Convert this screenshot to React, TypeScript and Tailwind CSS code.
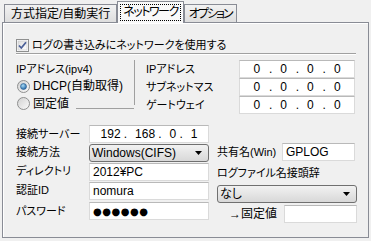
const FONT = {
  fontFamily: '"Liberation Sans", "Noto Sans CJK JP", sans-serif',
  fontFeatureSettings: '"palt"',
};

function CheckBox() {
  return (
    <svg width="13" height="13" viewBox="0 0 13 13" className="shrink-0">
      <defs>
        <linearGradient id="cbg" x1="0" y1="0" x2="1" y2="1">
          <stop offset="0" stopColor="#dcdcdc" />
          <stop offset="1" stopColor="#ffffff" />
        </linearGradient>
      </defs>
      <rect x="0.5" y="0.5" width="12" height="12" fill="#fff" stroke="#8e8f8f" />
      <rect x="2" y="2" width="9" height="9" fill="url(#cbg)" stroke="#c2c4c6" strokeWidth="0.6" />
      <path d="M3 6.5 L5.3 9 L10 3.3" fill="none" stroke="#4a5f97" strokeWidth="1.8" />
    </svg>
  );
}

function Radio({ on }: { on?: boolean }) {
  return (
    <svg width="13" height="13" viewBox="0 0 13 13" className="shrink-0">
      <defs>
        <radialGradient id="rg" cx="0.4" cy="0.35" r="0.7">
          <stop offset="0" stopColor="#a8dbf5" />
          <stop offset="1" stopColor="#1b5ea0" />
        </radialGradient>
        <linearGradient id="ro" x1="0" y1="0" x2="1" y2="1">
          <stop offset="0" stopColor="#d0d0d0" />
          <stop offset="1" stopColor="#fbfbfb" />
        </linearGradient>
      </defs>
      <circle cx="6.5" cy="6.5" r="6" fill="url(#ro)" stroke="#8e8f8f" />
      {on && <circle cx="6.5" cy="6.5" r="3" fill="url(#rg)" stroke="#2a5d8f" strokeWidth="0.6" />}
    </svg>
  );
}

function Box({ w, children }: { w: string; children?: React.ReactNode }) {
  return (
    <div className={`${w} h-[18px] bg-white border border-[#dadada] border-t-[#b9b9b9] flex items-center text-[12px] text-black px-[3px]`}>
      {children}
    </div>
  );
}

function Select({ w, children }: { w: string; children: React.ReactNode }) {
  return (
    <div className={`${w} h-[18px] rounded-[3px] border border-[#707070] bg-gradient-to-b from-[#f2f2f2] to-[#d8d8d8] flex items-center px-[2px] text-[12px]`}>
      <span className="flex-1">{children}</span>
      <svg width="7" height="4" viewBox="0 0 7 4" className="mr-[4px]">
        <path d="M0 0 H7 L3.5 4 Z" fill="#000" />
      </svg>
    </div>
  );
}

function Ip({ parts }: { parts: string[] }) {
  return (
    <span className="flex w-full justify-around px-[6px]">
      {parts.map((p, i) => (
        <span key={i} className="flex gap-[8px]">
          {i > 0 && <span>.</span>}
          <span>{p}</span>
        </span>
      ))}
    </span>
  );
}

export default function App() {
  return (
    <div className="w-[371px] h-[241px] bg-[#f0f0f0] overflow-hidden text-[11px] text-black" style={FONT}>
      {/* tabs */}
      <div className="flex items-end pl-[4px] h-[22px] relative z-10">
        <div className="h-[18px] px-[6px] border border-[#898c95] border-b-0 bg-gradient-to-b from-[#f2f2f2] to-[#dedede] flex items-center text-[12px]">
          方式指定/自動実行
        </div>
        <div className="h-[22px] -mb-px px-[2px] pt-[2px] border border-[#898c95] border-b-0 bg-[#f9f9f9] flex items-start text-[12px]">
          <span className="border border-dotted border-black px-[2px] leading-[15px] tracking-[-1.5px]">ネットワーク</span>
        </div>
        <div className="h-[18px] px-[4px] border border-[#898c95] border-b-0 bg-gradient-to-b from-[#f2f2f2] to-[#dedede] flex items-center text-[12px] tracking-[-2px]">
          オプション
        </div>
      </div>

      {/* panel */}
      <div className="mx-[2px] h-[216px] border border-[#898c95] bg-[#f0f0f0] shadow-[inset_1px_1px_0_#ffffff] pl-[13px] pr-[12px]">
        <div className="flex items-center gap-[3px] mt-[15px] h-[14px]">
          <CheckBox />
          <span>ログの書き込みにネットワークを使用する</span>
        </div>
        <div className="mt-[1px] border-b border-[#a0a0a0] shadow-[0_1px_0_#ffffff]" />

        {/* IP section */}
        <div className="flex mt-[6px]">
          <div className="w-[119px] flex flex-col">
            <div className="h-[45px] border-r border-[#a0a0a0] flex flex-col">
              <div className="h-[18px] flex items-center mt-[1px]">IPアドレス(ipv4)</div>
              <div className="h-[17px] flex items-center gap-[3px] pl-[1px]">
                <Radio on />
                <span className="text-[12px]">DHCP(自動取得)</span>
              </div>
              <div className="h-[18px] flex items-center gap-[3px] pl-[1px]">
                <Radio />
                <span className="text-[12px]">固定値</span>
                <div className="flex-1 ml-[4px] mt-[9px] border-b border-[#a0a0a0]" />
              </div>
            </div>
          </div>
          <div className="flex flex-col ml-[11px]">
            {["IPアドレス", "サブネットマス", "ゲートウェイ"].map((l) => (
              <div key={l} className="flex items-center h-[18px]">
                <span className="w-[93px]">{l}</span>
                <Box w="w-[116px]">
                  <Ip parts={["0", "0", "0", "0"]} />
                </Box>
              </div>
            ))}
          </div>
        </div>

        {/* connection section */}
        <div className="flex mt-[11px]">
          <div className="flex flex-col">
            <div className="flex items-center h-[18px]">
              <span className="w-[73px]">接続サーバー</span>
              <Box w="w-[120px]">
                <Ip parts={["192", "168", "0", "1"]} />
              </Box>
            </div>
            <div className="flex items-center h-[19px]">
              <span className="w-[73px]">接続方法</span>
              <Select w="w-[120px]">Windows(CIFS)</Select>
            </div>
            <div className="flex items-center h-[19px]">
              <span className="w-[73px]">ディレクトリ</span>
              <Box w="w-[120px]">2012¥PC</Box>
            </div>
            <div className="flex items-center h-[19px]">
              <span className="w-[73px]">認証ID</span>
              <Box w="w-[120px]">nomura</Box>
            </div>
            <div className="flex items-center h-[18px] mt-[2px]">
              <span className="w-[73px]">パスワード</span>
              <Box w="w-[120px]">
                <span className="text-[10px] tracking-[0.5px]" style={{ fontFamily: '"DejaVu Sans", sans-serif' }}>●●●●●●</span>
              </Box>
            </div>
          </div>
          <div className="flex flex-col ml-[8px] mt-[18px]">
            <div className="flex items-center h-[18px]">
              <span className="w-[65px]">共有名(Win)</span>
              <Box w="w-[73px]">GPLOG</Box>
            </div>
            <div className="h-[24px] flex items-center">ログファイル名接頭辞</div>
            <Select w="w-[140px]">なし</Select>
            <div className="flex items-center h-[18px] mt-[2px] pl-[12px]">
              <span className="w-[55px] text-[12px]">→固定値</span>
              <Box w="w-[73px]" />
            </div>
          </div>
        </div>
      </div>
    </div>
  );
}
